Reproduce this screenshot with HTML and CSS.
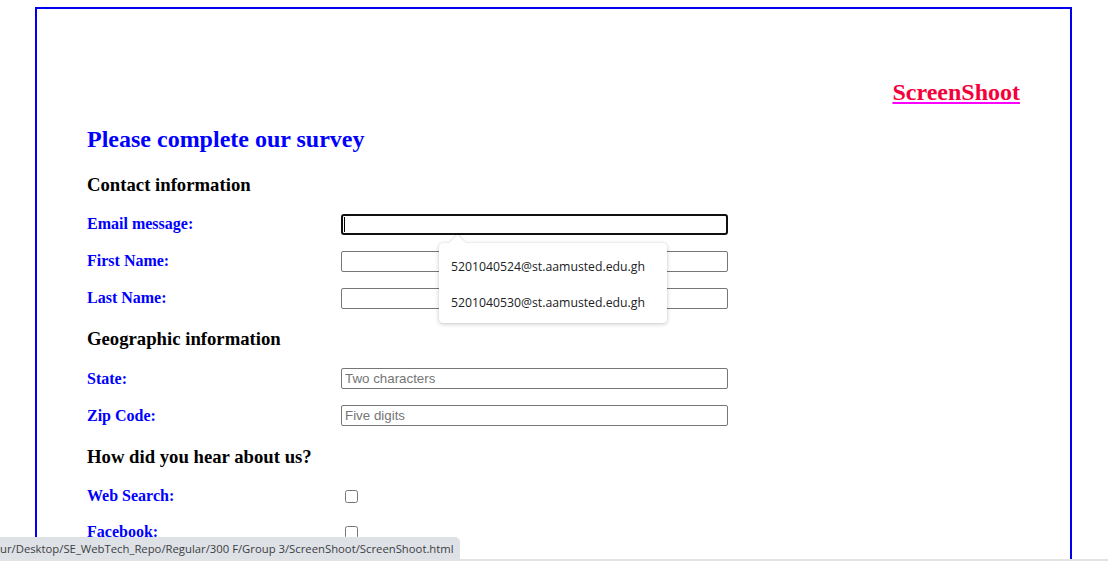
FILE: index.html
```html
<!DOCTYPE html>
<html lang="en">
<head>
<meta charset="utf-8">
<title>ScreenShoot</title>
<link rel="stylesheet" href="styles.css">
</head>
<body>
<div class="page">
  <header class="top">
    <h2 class="brand"><a href="#">ScreenShoot</a></h2>
  </header>
  <h2 class="title">Please complete our survey</h2>
  <form class="survey">
    <h3 class="section">Contact information</h3>
    <div class="row">
      <label>Email message:</label>
      <span class="field-wrap"><input type="text" class="field focused"><span class="caret"></span></span>
    </div>
    <div class="row">
      <label>First Name:</label>
      <input type="text" class="field">
    </div>
    <div class="row">
      <label>Last Name:</label>
      <input type="text" class="field">
    </div>

    <h3 class="section">Geographic information</h3>
    <div class="row">
      <label>State:</label>
      <input type="text" class="field" placeholder="Two characters">
    </div>
    <div class="row">
      <label>Zip Code:</label>
      <input type="text" class="field" placeholder="Five digits">
    </div>

    <h3 class="section">How did you hear about us?</h3>
    <div class="row check-row">
      <label>Web Search:</label>
      <input type="checkbox" class="check">
    </div>
    <div class="row check-row">
      <label>Facebook:</label>
      <input type="checkbox" class="check">
    </div>
  </form>
</div>

<div class="autofill">
  <div class="autofill-item">5201040524@st.aamusted.edu.gh</div>
  <div class="autofill-item">5201040530@st.aamusted.edu.gh</div>
</div>

<div class="statusbar"><span>ur/Desktop/SE_WebTech_Repo/Regular/300 F/Group 3/ScreenShoot/ScreenShoot.html</span></div>
<div class="window-edge"></div>
</body>
</html>
```
FILE: styles.css
```css
html {
  overflow: hidden;
}

body {
  margin: 0;
  font-family: "Liberation Serif", "Times New Roman", serif;
  background: #ffffff;
  color: #000000;
}

.page {
  width: 933px;
  margin: 7px 0 0 35px;
  padding: 0 50px 80px;
  border: 2px solid #0000ee;
}

.top {
  padding-top: 70px;
  text-align: right;
}

.brand {
  margin: 0;
  font-size: 24px;
  line-height: 27.6px;
  font-weight: bold;
}

.brand a {
  color: #f5003a;
  text-decoration: underline;
  text-decoration-color: #ff00ff;
}

.title {
  margin: 19px 0 20.5px;
  font-size: 24px;
  line-height: 27.6px;
  color: #0000ff;
  font-weight: bold;
}

.survey {
  margin: 0;
}

.section {
  margin: 19.5px 0 18.5px;
  font-size: 18.72px;
  line-height: 21.5px;
  font-weight: bold;
}

.row {
  display: grid;
  grid-template-columns: 254px 387px;
  align-items: center;
  height: 21px;
  margin-bottom: 16px;
}

.row label {
  font-size: 16px;
  font-weight: bold;
  color: #0000ff;
}

.check-row {
  margin-bottom: 15px;
}

.field-wrap {
  position: relative;
  display: block;
  height: 21px;
}

.field {
  box-sizing: border-box;
  width: 387px;
  height: 21px;
  margin: 0;
  padding: 1px 3px;
  border: 1px solid #767676;
  border-radius: 2px;
  font-family: "Liberation Sans", Arial, sans-serif;
  font-size: 13.33px;
  color: #000;
  background: #fff;
  outline: none;
}

.field::placeholder {
  color: #757575;
}

.field.focused {
  border: 2px solid #101010;
  border-radius: 3px;
}

.caret {
  position: absolute;
  left: 3px;
  top: 3px;
  width: 1px;
  height: 15px;
  background: #000;
}

.check {
  width: 13px;
  height: 13px;
  margin: 0 0 0 4px;
}

.autofill {
  position: absolute;
  left: 439px;
  top: 243px;
  width: 228px;
  height: 80px;
  box-sizing: border-box;
  padding-top: 6px;
  background: #ffffff;
  border-radius: 4px;
  box-shadow: 0 1px 4px rgba(0, 0, 0, 0.22), 0 0 1px rgba(0, 0, 0, 0.12);
  font-family: "Open Sans", "Noto Sans", sans-serif;
  font-size: 12.25px;
  color: #202124;
}

.autofill::before {
  content: "";
  position: absolute;
  left: 13px;
  top: -6px;
  width: 11px;
  height: 11px;
  background: #ffffff;
  transform: rotate(45deg);
  box-shadow: -1px -1px 2px rgba(0, 0, 0, 0.1);
}

.autofill::after {
  content: "";
  position: absolute;
  left: 8px;
  top: 0;
  width: 22px;
  height: 8px;
  background: #ffffff;
}

.autofill-item {
  position: relative;
  z-index: 1;
  height: 36px;
  line-height: 36px;
  padding-left: 12px;
}

.statusbar {
  position: fixed;
  left: 0;
  bottom: 2px;
  width: 460px;
  height: 22px;
  box-sizing: border-box;
  padding-left: 0;
  display: flex;
  justify-content: flex-start;
  align-items: center;
  overflow: hidden;
  white-space: nowrap;
  background: #dee1e6;
  border-top-right-radius: 5px;
  font-family: "Open Sans", "Noto Sans", sans-serif;
  font-size: 11.3px;
  color: #3c4043;
}

.window-edge {
  position: fixed;
  left: 0;
  right: 0;
  bottom: 0;
  height: 2px;
  background: #e3e3e3;
}
```
